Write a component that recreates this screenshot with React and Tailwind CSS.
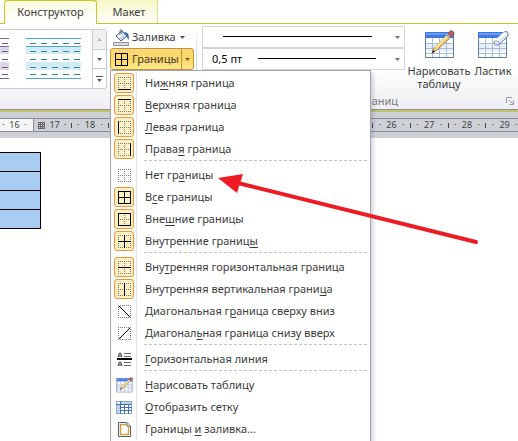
import clsx from "clsx";

const RULER = [17, 18, 19, 20, 21, 22, 23, 24, 25, 26, 27, 28, 29];

const LINES = {
  t: "M0 .5H13",
  b: "M0 12.5H13",
  l: "M.5 0V13",
  r: "M12.5 0V13",
  h: "M0 6.5H13",
  v: "M6.5 0V13",
};

// solid = the sides drawn in black, everything else stays dotted
const BorderIcon = ({ solid = "", diagonal }) => {
  const sides = diagonal ? "tblr" : "tblrhv";
  return (
    <svg width="13" height="13" viewBox="0 0 13 13" shapeRendering="crispEdges" fill="none">
      {sides.split("").filter((s) => !solid.includes(s)).map((s) => (
        <path key={s} d={LINES[s]} stroke="#777" strokeDasharray="1 1" />
      ))}
      {solid.split("").map((s) => (
        <path key={s} d={LINES[s]} stroke="#000" />
      ))}
      {diagonal && <path d={diagonal} stroke="#000" shapeRendering="auto" />}
    </svg>
  );
};

const Grid = () => (
  <>
    <path d="M1 2H30V28H1z" fill="#fff" />
    <path d="M1 14H30V21H1z" fill="#e9f0f9" />
    <path d="M1.5 8V28M8.5 8V28M15.5 8V28M22.5 8V28M1 13.5H30M1 18.5H30M1 23.5H30" stroke="#a9bdd6" />
    <path d="M1.5 2V27.500H29.500V2" stroke="#5f7ea6" fill="none" />
    <path d="M1 2H30V8H1z" fill="#3f78de" />
    <path d="M2 3H29V5H2z" fill="#6a9cf2" />
  </>
);

const Pencil = () => (
  <>
    <path d="M8 23L10 18L24 4L27 7L13 20z" fill="#f4cf74" stroke="#8a6426" strokeWidth=".8" />
    <path d="M11 18L25 4" stroke="#fff0b8" strokeWidth="1.500" />
    <path d="M24 4L26 1Q30 0 30 4L27 7z" fill="#c9545a" stroke="#7c4a58" strokeWidth=".7" />
    <path d="M23 5L26 8" stroke="#8ea3bd" strokeWidth="1.500" />
    <path d="M8 23L9 20L11 22z" fill="#222" />
  </>
);

const DrawTableIcon = ({ size = 31 }) => (
  <svg className="shrink-0" width={size} height={size} viewBox="0 0 31 31">
    <Grid />
    <Pencil />
  </svg>
);

const EraserIcon = () => (
  <svg className="shrink-0" width="33" height="31" viewBox="0 0 33 31">
    <Grid />
    <path d="M17 12L27 2Q32 0 31 6L23 14Q17 17 17 12z" fill="#dfe7f2" stroke="#6b83a5" />
    <path d="M19 11L28 3" stroke="#fff" strokeWidth="3" />
    <path d="M22 14Q23 11 19 11" stroke="#8da2c0" fill="none" />
  </svg>
);

const LineIcon = () => (
  <svg width="15" height="15" viewBox="0 0 15 15" fill="none">
    <path d="M1 5L2.500 1H3.500L5 5M2 4H4M1 14L2.500 10H3.500L5 14M2 13H4" stroke="#333" />
    <path d="M7 1.500H14M7 4.500H14M7 10.500H14M7 13.500H14" stroke="#666" shapeRendering="crispEdges" />
    <path d="M0 6H15V8H0z" fill="#000" />
  </svg>
);

const GridIcon = () => (
  <svg width="16" height="13" viewBox="0 0 16 13" shapeRendering="crispEdges">
    <path d="M0 0H16V13H0z" fill="#fff" />
    <path d="M4 0H16V3H4zM0 3H4V13H0z" fill="#bcd3f0" />
    <path d="M.5 .5H15.500V12.500H.5z" stroke="#8fa9cd" fill="none" />
    <path d="M4.500 0V13M8.500 3V13M12.500 3V13M0 3.500H16M4 6.500H16M4 9.500H16" stroke="#4470ae" fill="none" />
  </svg>
);

const PageIcon = () => (
  <svg width="13" height="15" viewBox="0 0 13 15">
    <path d="M.5 .5H9L12.500 4V14.500H.5z" fill="#fff" stroke="#47618a" />
    <path d="M2.500 2.500H8.500L10.500 4.500V12.500H2.500z" fill="#fff" stroke="#e39a35" strokeWidth="1.500" />
    <path d="M9 1V4H12" fill="#dfe8f4" stroke="#47618a" strokeWidth=".7" />
  </svg>
);

const BucketIcon = () => (
  <svg width="17" height="17" viewBox="0 0 17 17">
    <path d="M3 7L9 2L14 7L8 12z" fill="#c9d7e8" stroke="#4b6388" />
    <path d="M4 7L9 3L11 5L6 9z" fill="#fff" />
    <path d="M7 6V1.500Q8 0 9 1.500V5" fill="none" stroke="#4b6388" />
    <path d="M11 3Q17 3 15.500 11Q14 9 14 7z" fill="#2f66b0" />
    <path d="M.5 13.500H15.500V16.500H.5z" fill="#ddd" stroke="#8c959f" />
  </svg>
);

const Caret = ({ className }) => (
  <svg className={className} width="5" height="3" viewBox="0 0 5 3">
    <path d="M0 0H5L2.500 3z" fill="currentColor" />
  </svg>
);

const TableStyle = ({ line, dash, fill }) => (
  <svg className="shrink-0" width="55" height="42" viewBox="0 0 55 42" shapeRendering="crispEdges">
    <path d="M0 9H55V16H0zM0 24H55V32H0z" fill={fill} />
    <path d="M0 .5H55M0 8.500H55M0 40.500H55" stroke={line} />
    <path
      d="M4 5.500H55M4 13.500H55M4 21.500H55M4 29.500H55M4 36.500H55"
      stroke={dash}
      strokeDasharray="6 5"
    />
  </svg>
);

const MENU = [
  [
    { text: ["Ни", "ж", "няя граница"], icon: <BorderIcon solid="b" />, on: true },
    { text: ["", "В", "ерхняя граница"], icon: <BorderIcon solid="t" />, on: true },
    { text: ["", "Л", "евая граница"], icon: <BorderIcon solid="l" />, on: true },
    { text: ["Права", "я", " граница"], icon: <BorderIcon solid="r" />, on: true },
  ],
  [
    { text: ["Нет гр", "а", "ницы"], icon: <BorderIcon /> },
    { text: ["В", "с", "е границы"], icon: <BorderIcon solid="tblrhv" />, on: true },
    { text: ["Вне", "ш", "ние границы"], icon: <BorderIcon solid="tblr" />, on: true },
    { text: ["Внутренние границ", "ы", ""], icon: <BorderIcon solid="hv" />, on: true },
  ],
  [
    { text: ["Вну", "т", "ренняя горизонтальная граница"], icon: <BorderIcon solid="h" />, on: true },
    { text: ["Внутренняя вертикальная грани", "ц", "а"], icon: <BorderIcon solid="v" />, on: true },
    { text: ["Диагональная г", "р", "аница сверху вниз"], icon: <BorderIcon diagonal="M1 1L12 12" /> },
    { text: ["Диагонал", "ь", "ная граница снизу вверх"], icon: <BorderIcon diagonal="M1 12L12 1" /> },
  ],
  [{ text: ["", "Г", "оризонтальная линия"], icon: <LineIcon /> }],
  [
    { text: ["", "Н", "арисовать таблицу"], icon: <DrawTableIcon size={17} /> },
    { text: ["", "О", "тобразить сетку"], icon: <GridIcon /> },
    { text: ["Границы ", "и", " заливка..."], icon: <PageIcon /> },
  ],
];

const MenuItem = ({ text, icon, on }) => (
  <button role="menuitem" className="flex h-[22px] w-full items-center pl-[3px] text-left">
    <span
      className={clsx(
        "flex size-5 shrink-0 items-center justify-center rounded-[3px] border",
        on ? "border-[#f29536] bg-[#fcf1c5]" : "border-transparent"
      )}
    >
      {icon}
    </span>
    <span className="pl-[11px] whitespace-pre">
      {text[0]}
      <u className="underline-offset-2">{text[1]}</u>
      {text[2]}
    </span>
  </button>
);

const BordersMenu = () => (
  <div
    role="menu"
    className="absolute top-full left-0 z-10 w-[261px] border border-[#a0a5ad] bg-white pt-px pb-1 shadow-[3px_3px_3px_rgba(90,80,130,0.2)]"
  >
    <div className="bg-[linear-gradient(#e2e4e7,#e2e4e7)] bg-[length:1px_100%] bg-[position:25px_0] bg-no-repeat">
      {MENU.map((group, i) => (
        <div key={i}>
          {i > 0 && (
            <div className="flex h-1 items-start pr-0.5 pl-[33px]">
              <div className="h-px w-full bg-[repeating-linear-gradient(90deg,#c4c4c4_0_3px,transparent_3px_5px)]" />
            </div>
          )}
          {group.map((item) => (
            <MenuItem key={item.text.join("")} {...item} />
          ))}
        </div>
      ))}
    </div>
  </div>
);

const LineSelect = ({ label, value, lineClass }) => (
  <div className="relative h-[22px] border border-[#d3d5d8] bg-white">
    <select aria-label={label} className="h-full w-full appearance-none pl-[9px] leading-5 text-black">
      <option>{value}</option>
    </select>
    <span className={clsx("pointer-events-none absolute top-[9px] h-px bg-black", lineClass)} />
    <Caret className="pointer-events-none absolute top-[9px] right-1 text-[#6d7278]" />
  </div>
);

const Ribbon = () => (
  <div className="flex h-[85px] bg-linear-to-b from-white via-white to-[#eceef1]">
    <div className="mt-[5px] flex h-[60px] w-[107px] shrink-0 rounded-r-[3px] border border-l-0 border-[#c9ccd1] bg-white">
      <div className="flex flex-1 items-center justify-end gap-[17px] overflow-hidden pr-[11px]">
        <TableStyle line="#8064a2" dash="#6f568f" fill="#dfd8e8" />
        <TableStyle line="#4bacc6" dash="#31859b" fill="#d2eaf1" />
      </div>
      <div className="flex w-[14px] flex-col divide-y divide-[#c9ccd1] border-l border-[#c9ccd1] text-[#555]">
        <button aria-label="Вверх" className="flex flex-1 items-center justify-center bg-[#f0f1f3] text-[#b5b8bd]">
          <Caret className="rotate-180" />
        </button>
        <button aria-label="Вниз" className="flex flex-1 items-center justify-center">
          <Caret />
        </button>
        <button aria-label="Ещё" className="flex flex-1 flex-col items-center justify-center gap-0.5">
          <span className="h-px w-[7px] bg-[#555]" />
          <Caret />
        </button>
      </div>
    </div>

    <div className="ml-[3px] w-[84px] shrink-0 pt-[2px]">
      <button className="flex h-[22px] w-full items-center pl-[3px]">
        <BucketIcon />
        <span className="pl-[2px]">Заливка</span>
        <Caret className="ml-1 text-[#555]" />
      </button>
      <div className="relative">
        <div className="flex h-[22px] rounded-[3px] border border-[#c2923c] bg-linear-to-b from-[#fbd877] via-[#fdd765] to-[#fee98d]">
          <button className="flex flex-1 items-center pl-1">
            <svg width="13" height="13" viewBox="0 0 13 13" shapeRendering="crispEdges">
              <path d="M.5 .5H12.500V12.500H.5zM6.500 0V13M0 6.500H13" fill="none" stroke="#000" />
            </svg>
            <span className="pl-1">Границы</span>
          </button>
          <button aria-label="Открыть меню границ" className="flex w-3 items-center justify-center border-l border-[#c2923c]">
            <Caret className="text-[#6b5a30]" />
          </button>
        </div>
        <BordersMenu />
      </div>
    </div>

    <div className="ml-[2px] w-px shrink-0 bg-linear-to-b from-white via-[#c9ccd1] to-[#d5d8dc]" />

    <div className="relative flex min-w-0 flex-1 flex-col">
      <div className="flex">
        <div className="ml-[5px] w-[203px] shrink-0 pt-[2px]">
          <LineSelect label="Стиль пера" value="" lineClass="left-5 right-8" />
          <LineSelect label="Толщина пера" value="0,5 пт" lineClass="left-[55px] right-7" />
        </div>
        <button className="mt-[6px] flex w-[68px] shrink-0 flex-col items-center leading-[13px]">
          <DrawTableIcon />
          <span className="pt-[3px]">Нарисовать таблицу</span>
        </button>
        <button className="mt-[6px] flex w-10 shrink-0 flex-col items-center leading-[13px]">
          <EraserIcon />
          <span className="pt-[3px]">Ластик</span>
        </button>
      </div>
      <div className="absolute bottom-0 left-0 flex h-4 w-full items-center justify-between pr-1 pl-[103px]">
        <span className="text-[#75797f]">Рисование границ</span>
        <button aria-label="Параметры">
          <svg width="8" height="8" viewBox="0 0 8 8" fill="none" stroke="#9a9da2">
            <path d="M.5 6V.5H6M3 3L7 7M7.500 3.500V7.500H3.500" />
          </svg>
        </button>
      </div>
    </div>
  </div>
);

const Ruler = () => (
  <div className="h-[26px] overflow-hidden bg-[#cdd1d6] pt-[6px]">
    <div className="flex h-[14px] border-y border-[#858c95] text-[9px] leading-3 text-[#444]">
      <div className="flex w-[34px] shrink-0 items-center justify-around border-r border-[#858c95] bg-[#f7f7f7] pr-1">
        <span>·</span>
        <span>16</span>
        <span>·</span>
      </div>
      <div className="flex w-[490px] shrink-0">
        {RULER.map((n, i) => (
          <div key={n} className="flex flex-1 items-center">
            <div className="flex flex-1 items-center justify-evenly">
              {i === 0 ? (
                <svg width="7" height="7" viewBox="0 0 7 7" shapeRendering="crispEdges" stroke="#666">
                  <path d="M.5 0V7M2.500 0V7M4.500 0V7M6.500 0V7M0 .5H7M0 2.500H7M0 4.500H7M0 6.500H7" />
                </svg>
              ) : (
                <span>·</span>
              )}
              <span>{n}</span>
              <span>·</span>
            </div>
            <span className="h-[5px] w-px bg-[#444]" />
          </div>
        ))}
      </div>
    </div>
  </div>
);

const App = () => {
  return (
    <div className="relative min-h-screen overflow-hidden bg-white font-['Noto_Sans',sans-serif] text-[11px] text-[#3b3b3b]">
      <nav className="flex h-6 border-b border-[#c8c81e] pl-1">
        <button className="-mb-px h-6 w-[93px] rounded-t-[3px] border-x border-t border-[#c8c81e] bg-linear-to-b from-[#fafae0] to-white">
          Конструктор
        </button>
        <button className="w-[61px] border-r border-[#d9d98a] bg-linear-to-b from-[#f6f6c4] to-white pt-px pl-1">Макет</button>
      </nav>
      <Ribbon />
      <div className="h-[3px] border-t border-[#8f9296] bg-[#bfc26a]" />
      <Ruler />

      <table className="mt-[14px] w-[41px] border-collapse">
        <tbody>
          {[1, 2, 3, 4].map((row) => (
            <tr key={row}>
              <td className="h-[19px] border border-l-0 border-black bg-[#a9cdf2]" />
            </tr>
          ))}
        </tbody>
      </table>

      {/* pointer to the "no border" item */}
      <svg className="pointer-events-none absolute top-[172px] left-[218px] z-20" width="262" height="74" viewBox="0 0 262 74">
        <path d="M20 11L258 70" stroke="#ed1c24" strokeWidth="4" strokeLinecap="round" />
        <path d="M0 6L25 2L19 21z" fill="#ed1c24" />
      </svg>
    </div>
  );
};

export default App;
